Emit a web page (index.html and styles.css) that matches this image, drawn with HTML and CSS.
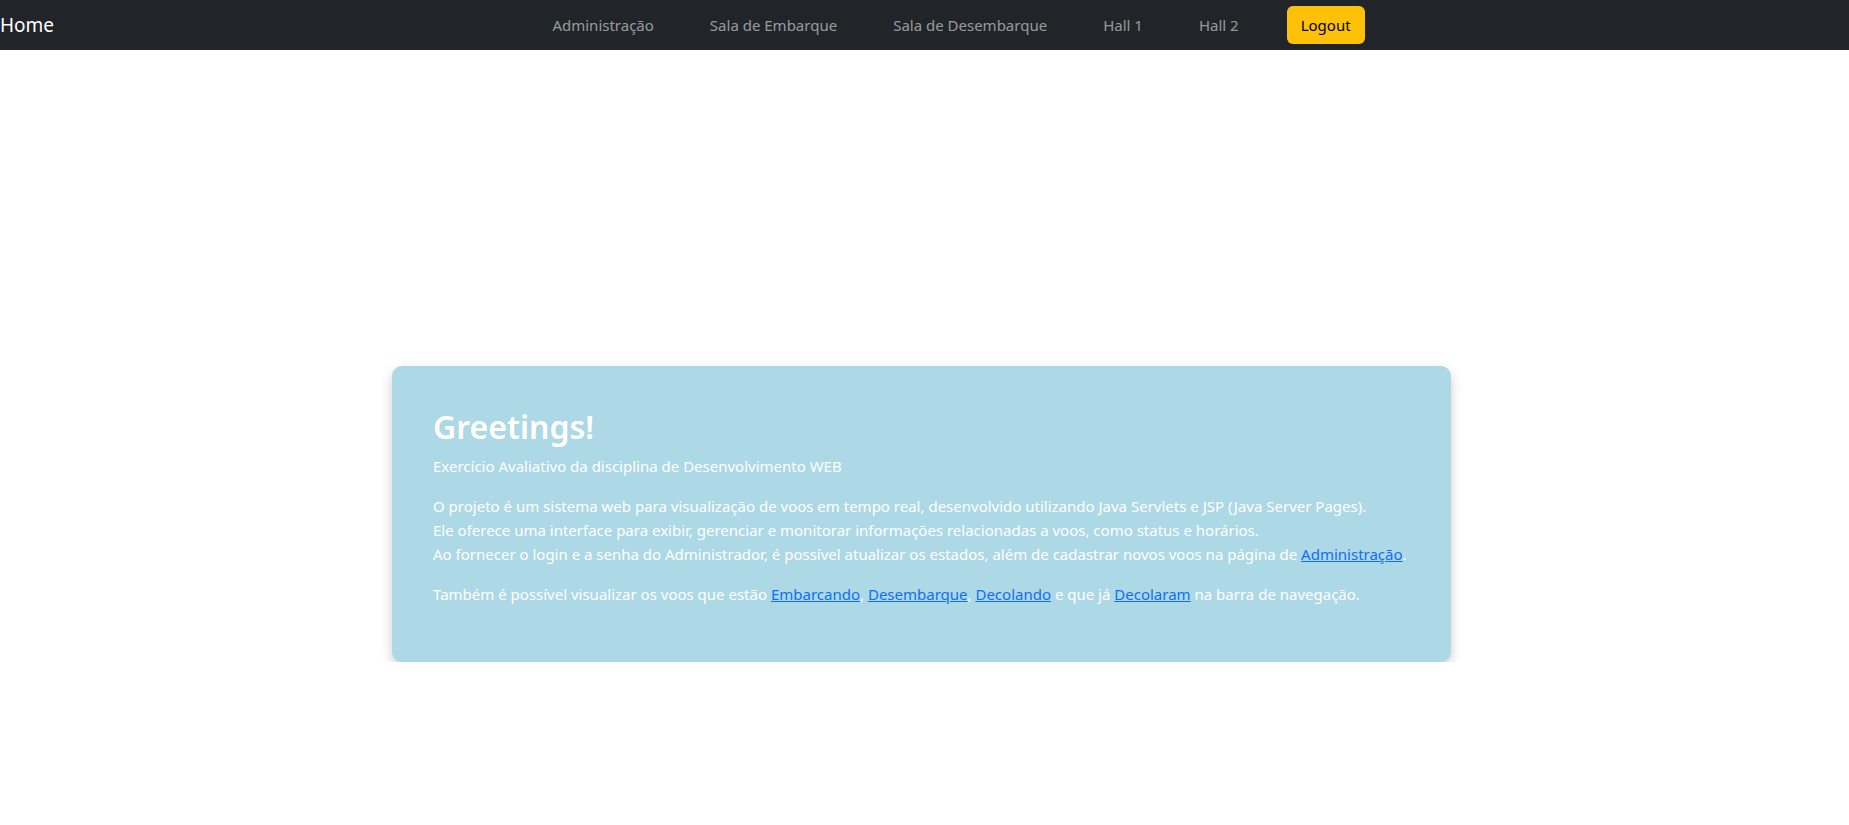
FILE: index.html
```html
<!DOCTYPE html>
<html lang="pt-BR">
<head>
<meta charset="utf-8">
<title>Home</title>
<link rel="stylesheet" href="styles.css">
</head>
<body>
<nav class="navbar">
  <a class="brand" href="#">Home</a>
  <ul class="nav-list">
    <li><a class="nav-link" href="#">Administração</a></li>
    <li><a class="nav-link" href="#">Sala de Embarque</a></li>
    <li><a class="nav-link" href="#">Sala de Desembarque</a></li>
    <li><a class="nav-link" href="#">Hall 1</a></li>
    <li><a class="nav-link" href="#">Hall 2</a></li>
    <li><a class="btn-logout" href="#">Logout</a></li>
  </ul>
</nav>
<main class="main">
  <section class="card">
    <h2 class="card-title">Greetings!</h2>
    <p class="card-text">Exercício Avaliativo da disciplina de Desenvolvimento WEB</p>
    <p class="card-text">O projeto é um sistema web para visualização de voos em tempo real, desenvolvido utilizando Java Servlets e JSP (Java Server Pages).<br>Ele oferece uma interface para exibir, gerenciar e monitorar informações relacionadas a voos, como status e horários.<br>Ao fornecer o login e a senha do Administrador, é possível atualizar os estados, além de cadastrar novos voos na página de <a href="#">Administração</a>.</p>
    <p class="card-text">Também é possível visualizar os voos que estão <a href="#">Embarcando</a>, <a href="#">Desembarque</a>, <a href="#">Decolando</a> e que já <a href="#">Decolaram</a> na barra de navegação.</p>
  </section>
</main>
</body>
</html>
```
FILE: styles.css
```css
* { box-sizing: border-box; }
html, body { margin: 0; padding: 0; }
body {
  font-family: "Noto Sans", "Open Sans", sans-serif;
  font-size: 16px;
  line-height: 1.5;
  color: #212529;
  background: #fff;
}
.navbar {
  height: 50px;
  background: #212529;
  display: flex;
  align-items: center;
}
.brand {
  color: #fff;
  font-size: 19px;
  text-decoration: none;
  width: 60px;
  line-height: 30px;
}
.nav-list {
  list-style: none;
  margin: 0;
  padding: 0;
  flex: 1;
  display: flex;
  justify-content: center;
  align-items: center;
  gap: 40px;
}
.nav-link {
  display: block;
  padding: 8px 8px;
  font-size: 15px;
  color: rgba(255,255,255,0.55);
  text-decoration: none;
}
.btn-logout {
  display: block;
  padding: 6px 14px;
  font-size: 15px;
  background: #ffc107;
  color: #000;
  border-radius: 6px;
  text-decoration: none;
  line-height: 26px;
}
.main {
  display: flex;
  justify-content: center;
  padding-top: 316px;
}
.card {
  width: 1059px;
  margin-left: -6px;
  background: #add8e6;
  border-radius: 10px;
  box-shadow: 0 5px 12px rgba(0,0,0,0.2);
  padding: 42px 40px 24px 41px;
  color: #fff;
}
.card-title {
  margin: 0 0 8px;
  font-size: 32px;
  font-weight: 600;
  line-height: 1.2;
}
.card-text {
  margin: 0 0 16px;
  font-size: 15px;
  line-height: 24px;
}
.card-text:last-child { margin-bottom: 32px; }
.card-text a { color: #0d6efd; }
```
